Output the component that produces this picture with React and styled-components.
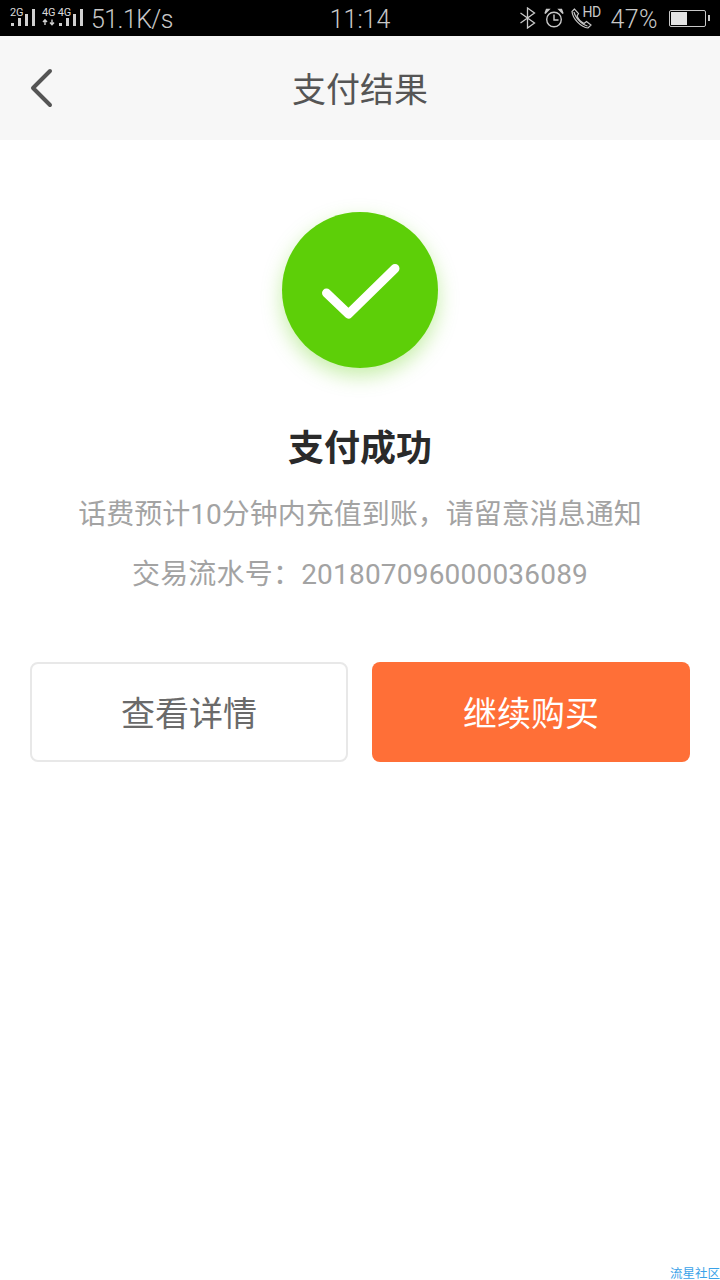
import styled, { createGlobalStyle } from "styled-components";

const GlobalStyle = createGlobalStyle`
  html, body {
    margin: 0;
    padding: 0;
    background: #fff;
  }
  * {
    box-sizing: border-box;
  }
`;

const FONT = `Roboto, "Noto Sans CJK SC", sans-serif`;

function SignalBars({ x = 0 }) {
  const heights = [3, 8, 12, 17];
  return (
    <g>
      {heights.map((h, i) => (
        <rect key={i} x={x + i * 7} y={17 - h} width="3" height={h} fill="#d0d0d0" />
      ))}
    </g>
  );
}

function Bluetooth() {
  return (
    <svg width="18" height="22" viewBox="0 0 18 22" fill="none" stroke="#c8c8c8" strokeWidth="1.300">
      <path d="M1.500 6l14 10-7 5V1l7 5-14 10" />
    </svg>
  );
}

function Alarm() {
  return (
    <svg width="20" height="20" viewBox="0 0 20 20" fill="none" stroke="#c8c8c8" strokeWidth="1.400">
      <circle cx="10" cy="11.500" r="7.300" />
      <path d="M10 6.500V12H14.500" />
      <path d="M1 5.500L5 1.500H2.500zM19 5.500L15 1.500H17.500z" fill="#c8c8c8" />
    </svg>
  );
}

function Phone() {
  return (
    <svg width="21" height="21" viewBox="0 0 21 21" fill="none" stroke="#c8c8c8" strokeWidth="1.200">
      <path d="M3.500 1L1 3.500C1.500 10.500 10 19.500 17 20L20 17L15.500 13.500L13 15.500C10 14 7 10.500 6 8L7.500 5.500z" />
      <path d="M3 4C4 9.500 11 17 16.500 18" />
    </svg>
  );
}

function App() {
  return (
    <Page>
      <GlobalStyle />
      <StatusBar>
        <StatusGroup>
          <NetBlock wide={false}>
            <NetLabel>2G</NetLabel>
            <svg width="26" height="17" viewBox="0 0 26 17">
              <SignalBars x={1} />
            </svg>
          </NetBlock>
          <NetBlock wide>
            <NetLabel>4G 4G</NetLabel>
            <svg width="42" height="17" viewBox="0 0 42 17">
              <path d="M3 16V11.500M1 13L3 10.800L5 13M10 10.500V15M8 13.500L10 15.800L12 13.500" stroke="#d0d0d0" strokeWidth="1.400" fill="none" />
              <SignalBars x={17} />
            </svg>
          </NetBlock>
          <Speed>51.1K/s</Speed>
        </StatusGroup>
        <Clock>11:14</Clock>
        <RightGroup>
          <Bluetooth />
          <Alarm />
          <PhoneBlock>
            <Phone />
            <HdMark>HD</HdMark>
          </PhoneBlock>
          <Percent>47%</Percent>
          <Battery>
            <BatteryFill level={47} />
          </Battery>
        </RightGroup>
      </StatusBar>
      <NavBar>
        <BackButton>
          <svg width="24" height="40" viewBox="0 0 24 40" fill="none">
            <path d="M21 3L4 20L21 37" stroke="#555" strokeWidth="4" strokeLinecap="round" strokeLinejoin="round" />
          </svg>
        </BackButton>
        <NavTitle>支付结果</NavTitle>
      </NavBar>
      <Result>
        <SuccessCircle>
          <svg width="80" height="60" viewBox="0 0 80 60" fill="none">
            <path d="M6.500 33L28.500 54L75 8.500" stroke="#fff" strokeWidth="9" strokeLinecap="round" strokeLinejoin="round" />
          </svg>
        </SuccessCircle>
        <ResultTitle>支付成功</ResultTitle>
        <ResultNote>话费预计10分钟内充值到账，请留意消息通知</ResultNote>
        <ResultSerial>交易流水号：201807096000036089</ResultSerial>
      </Result>
      <Actions>
        <ActionButton>查看详情</ActionButton>
        <ActionButton primary>继续购买</ActionButton>
      </Actions>
      <Watermark>流星社区</Watermark>
    </Page>
  );
}

const Page = styled.div`
  position: relative;
  width: 720px;
  height: 1280px;
  background: #fff;
  font-family: ${FONT};
  overflow: hidden;
`;

const StatusBar = styled.div`
  height: 36px;
  background: #000;
  display: flex;
  align-items: center;
  justify-content: space-between;
  padding: 0 11px 0 10px;
  position: relative;
`;

const StatusGroup = styled.div`
  display: flex;
  align-items: center;
`;

const RightGroup = styled(StatusGroup)`
  gap: 7px;
`;

const NetBlock = styled.div`
  position: relative;
  width: ${(p) => (p.wide ? "42px" : "26px")};
  height: 36px;
  margin-right: ${(p) => (p.wide ? "7px" : "6px")};
  padding-bottom: 10px;
  display: flex;
  align-items: flex-end;
`;

const NetLabel = styled.span`
  position: absolute;
  left: 0;
  top: 6px;
  font-size: 11px;
  line-height: 13px;
  letter-spacing: -0.2px;
  color: #d8d8d8;
  white-space: nowrap;
`;

const Speed = styled.span`
  font-size: 25px;
  font-weight: 300;
  color: #c8c8c8;
  letter-spacing: -0.6px;
  padding-top: 2px;
`;

const Percent = styled.span`
  font-size: 25px;
  font-weight: 300;
  color: #c8c8c8;
  letter-spacing: 0.4px;
  margin-left: 4px;
  padding-top: 2px;
`;

const PhoneBlock = styled.div`
  position: relative;
  width: 29px;
  height: 21px;
`;

const HdMark = styled.span`
  position: absolute;
  left: 12px;
  top: -4px;
  font-size: 14px;
  line-height: 16px;
  letter-spacing: -0.5px;
  color: #c8c8c8;
`;

const Clock = styled.span`
  position: absolute;
  left: 0;
  right: 0;
  text-align: center;
  font-size: 25px;
  font-weight: 300;
  color: #c8c8c8;
  padding-top: 2px;
`;

const Battery = styled.div`
  position: relative;
  width: 37px;
  height: 17px;
  border: 1.500px solid #c8c8c8;
  border-radius: 2px;
  padding: 1px;
  margin-left: 4px;
  margin-right: 3px;

  &::after {
    content: "";
    position: absolute;
    right: -5px;
    top: 4px;
    width: 2px;
    height: 6px;
    background: #c8c8c8;
  }
`;

const BatteryFill = styled.div`
  height: 100%;
  width: ${(p) => p.level}%;
  background: #e4e4e4;
`;

const NavBar = styled.div`
  height: 104px;
  background: #f7f7f7;
  display: flex;
  align-items: center;
  justify-content: center;
  position: relative;
`;

const BackButton = styled.div`
  position: absolute;
  left: 29px;
  top: 32px;
  display: flex;
`;

const NavTitle = styled.div`
  font-size: 34px;
  color: #555;
  padding-bottom: 2px;
`;

const Result = styled.div`
  display: flex;
  flex-direction: column;
  align-items: center;
  padding-top: 72px;
`;

const SuccessCircle = styled.div`
  width: 156px;
  height: 156px;
  border-radius: 50%;
  background: #5dcf08;
  box-shadow: 0 8px 20px rgba(93, 207, 8, 0.35);
  display: flex;
  align-items: center;
  justify-content: center;
`;

const ResultTitle = styled.div`
  margin-top: 56px;
  font-size: 36px;
  line-height: 50px;
  font-weight: 700;
  color: #2a2a2a;
`;

const ResultNote = styled.div`
  margin-top: 11px;
  font-size: 28px;
  line-height: 60px;
  color: #a3a3a3;
`;

const ResultSerial = styled.div`
  font-size: 28px;
  line-height: 60px;
  letter-spacing: 0.2px;
  color: #a3a3a3;
`;

const Actions = styled.div`
  display: grid;
  grid-template-columns: 1fr 1fr;
  gap: 24px;
  padding: 57px 30px 0;
`;

const ActionButton = styled.div`
  height: 100px;
  padding-bottom: 2px;
  border-radius: 8px;
  display: flex;
  align-items: center;
  justify-content: center;
  font-size: 34px;
  color: ${(p) => (p.primary ? "#fff" : "#6a6a6a")};
  background: ${(p) => (p.primary ? "#ff6f37" : "#fff")};
  border: ${(p) => (p.primary ? "none" : "2px solid #e8e8e8")};
`;

const Watermark = styled.div`
  position: absolute;
  right: 0;
  bottom: 0;
  font-size: 12.500px;
  line-height: 13px;
  color: #3aa2e8;
`;

export default App;
